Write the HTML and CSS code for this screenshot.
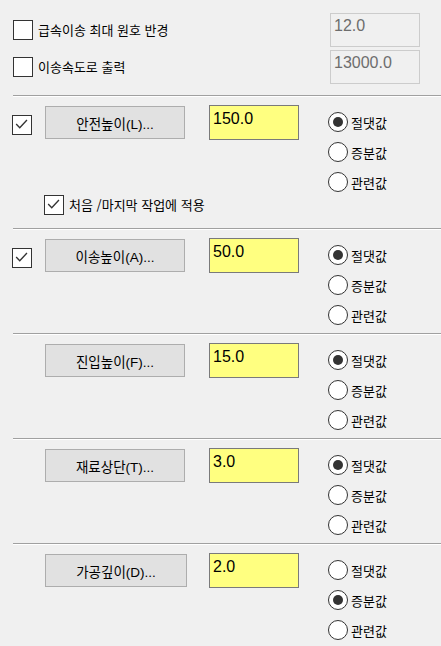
FILE: index.html
```html
<!DOCTYPE html>
<html lang="ko">
<head>
    <meta charset="UTF-8" />
    <title>이송 설정</title>
    <link rel="stylesheet" href="styles.css">
</head>
<body>
    <div class="panel">
        <!-- Rapid options -->
        <div class="options">
            <div class="option-row">
                <label class="check">
                    <span class="box"></span>
                    <span>급속이송 최대 원호 반경</span>
                </label>
                <div class="field disabled">12.0</div>
            </div>
            <div class="option-row">
                <label class="check">
                    <span class="box"></span>
                    <span>이송속도로 출력</span>
                </label>
                <div class="field disabled">13000.0</div>
            </div>
        </div>

        <div class="sep"></div>

        <!-- Clearance -->
        <div class="group group-first">
            <div class="group-main">
                <div class="check-cell">
                    <span class="box">
                        <svg viewBox="0 0 20 20"><polyline points="4.5,10 8.5,14 16.5,5.5" /></svg>
                    </span>
                </div>
                <div class="btn">안전높이(L)...</div>
                <div class="field value">150.0</div>
                <div class="radios">
                    <div class="radio-row"><span class="radio on"></span>절댓값</div>
                    <div class="radio-row"><span class="radio"></span>증분값</div>
                    <div class="radio-row"><span class="radio"></span>관련값</div>
                </div>
            </div>
            <label class="check sub">
                <span class="box">
                    <svg viewBox="0 0 20 20"><polyline points="4.5,10 8.5,14 16.5,5.5" /></svg>
                </span>
                <span>처음 /마지막 작업에 적용</span>
            </label>
        </div>

        <div class="sep"></div>

        <!-- Retract -->
        <div class="group">
            <div class="group-main">
                <div class="check-cell">
                    <span class="box">
                        <svg viewBox="0 0 20 20"><polyline points="4.5,10 8.5,14 16.5,5.5" /></svg>
                    </span>
                </div>
                <div class="btn">이송높이(A)...</div>
                <div class="field value">50.0</div>
                <div class="radios">
                    <div class="radio-row"><span class="radio on"></span>절댓값</div>
                    <div class="radio-row"><span class="radio"></span>증분값</div>
                    <div class="radio-row"><span class="radio"></span>관련값</div>
                </div>
            </div>
        </div>

        <div class="sep"></div>

        <!-- Feed -->
        <div class="group">
            <div class="group-main">
                <div class="check-cell"></div>
                <div class="btn">진입높이(F)...</div>
                <div class="field value">15.0</div>
                <div class="radios">
                    <div class="radio-row"><span class="radio on"></span>절댓값</div>
                    <div class="radio-row"><span class="radio"></span>증분값</div>
                    <div class="radio-row"><span class="radio"></span>관련값</div>
                </div>
            </div>
        </div>

        <div class="sep"></div>

        <!-- Top of stock -->
        <div class="group">
            <div class="group-main">
                <div class="check-cell"></div>
                <div class="btn">재료상단(T)...</div>
                <div class="field value">3.0</div>
                <div class="radios">
                    <div class="radio-row"><span class="radio on"></span>절댓값</div>
                    <div class="radio-row"><span class="radio"></span>증분값</div>
                    <div class="radio-row"><span class="radio"></span>관련값</div>
                </div>
            </div>
        </div>

        <div class="sep"></div>

        <!-- Depth -->
        <div class="group">
            <div class="group-main">
                <div class="check-cell"></div>
                <div class="btn wide">가공깊이(D)...</div>
                <div class="field value">2.0</div>
                <div class="radios">
                    <div class="radio-row"><span class="radio"></span>절댓값</div>
                    <div class="radio-row"><span class="radio on"></span>증분값</div>
                    <div class="radio-row"><span class="radio"></span>관련값</div>
                </div>
            </div>
        </div>
    </div>
</body>
</html>
```

FILE: styles.css
```css
* {
    margin: 0;
    padding: 0;
    box-sizing: border-box;
}

body {
    font-family: "Noto Sans CJK KR", "Noto Sans", sans-serif;
    font-size: 13px;
    color: #000;
    background: #f0f0f0;
    width: 441px;
    height: 646px;
    overflow: hidden;
}

/* Top options */
.options {
    height: 95px;
    padding: 13px 21px 0 13px;
    display: flex;
    flex-direction: column;
    gap: 3px;
}

.option-row {
    display: flex;
    align-items: center;
    justify-content: space-between;
    height: 34px;
}

.check {
    display: flex;
    align-items: center;
    gap: 5px;
    line-height: 20px;
}

.box {
    width: 20px;
    height: 20px;
    flex: none;
    background: #fff;
    border: 1px solid #333;
    display: block;
}

.box svg {
    display: block;
    width: 18px;
    height: 18px;
}

.box polyline {
    fill: none;
    stroke: #333;
    stroke-width: 1.5;
    transform: translate(-1px, -1px);
}

/* Separator */
.sep {
    margin-left: 13px;
    height: 2px;
    border-top: 1px solid #a0a0a0;
    border-bottom: 1px solid #fff;
}

/* Value groups */
.group {
    height: 103px;
    padding: 8px 0 0 12px;
}

.group-first {
    height: 131px;
}

.group-main {
    display: flex;
    align-items: flex-start;
}

.check-cell {
    width: 33px;
    flex: none;
    padding-top: 10px;
}

.btn {
    width: 140px;
    height: 33px;
    margin-top: 1px;
    margin-right: 24px;
    background: #e1e1e1;
    border: 1px solid #adadad;
    font-family: "Liberation Sans", "Noto Sans CJK KR", sans-serif;
    font-size: 13.5px;
    display: flex;
    align-items: center;
    justify-content: center;
    flex: none;
}

.btn.wide {
    width: 142px;
    margin-right: 22px;
}

.field {
    width: 90px;
    height: 35px;
    font-family: "Liberation Sans", Arial, sans-serif;
    font-size: 16px;
    padding: 4px 3px;
    flex: none;
}

.field.value {
    background: #ffff80;
    border: 1px solid #7a7a7a;
    margin-right: 29px;
}

.field.disabled {
    height: 34px;
    color: #6d6d6d;
    border: 1px solid #cccccc;
    padding-top: 3px;
}

.radios {
    margin-top: 2px;
}

.radio-row {
    height: 30px;
    display: flex;
    align-items: center;
    gap: 3px;
}

.radio {
    width: 20px;
    height: 20px;
    border-radius: 50%;
    border: 1px solid #333;
    background: #fff;
    display: flex;
    align-items: center;
    justify-content: center;
}

.radio.on::after {
    content: "";
    width: 10px;
    height: 10px;
    border-radius: 50%;
    background: #333;
}

/* First/last checkbox */
.check.sub {
    margin: -2px 0 0 32px;
}
```
